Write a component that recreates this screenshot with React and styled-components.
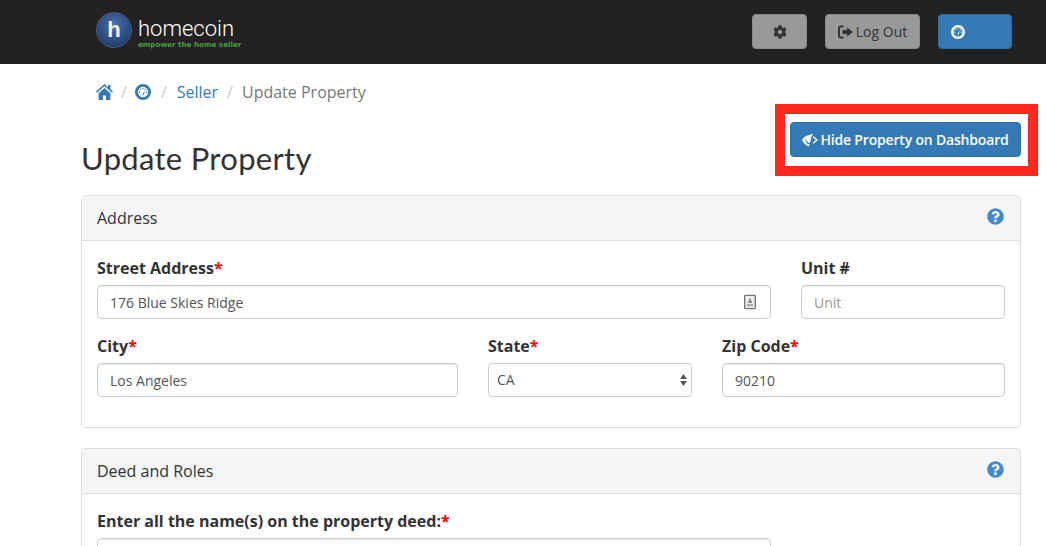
import React from "react";
import styled, { createGlobalStyle } from "styled-components";
import { FaCog, FaQuestionCircle } from "react-icons/fa";

const Global = createGlobalStyle`
  html, body { margin: 0; padding: 0; background: #fff; overflow: hidden; }
  body { font-family: "Open Sans", sans-serif; font-size: 14px; color: #333; }
  * { box-sizing: border-box; }
`;

const Page = styled.div`
  width: 1046px;
  height: 546px;
  overflow: hidden;
`;

const Navbar = styled.header`
  height: 64px;
  background: #222;
  display: flex;
  align-items: flex-start;
  justify-content: space-between;
  padding: 12px 34px 0 96px;
`;

const Logo = styled.div`
  display: flex;
  align-items: flex-start;
  gap: 6px;
`;

const LogoBadge = styled.div`
  width: 36px;
  height: 36px;
  border-radius: 50%;
  background: radial-gradient(circle at 50% 35%, #4a6fa5 0%, #2c4d80 55%, #18305a 100%);
  border: 1px solid #46597a;
  display: flex;
  align-items: center;
  justify-content: center;
  color: #f4f4f4;
  font: 700 22px "Liberation Sans", sans-serif;
`;

const LogoText = styled.div`
  display: flex;
  flex-direction: column;
  margin-top: 6px;
`;

const LogoName = styled.div`
  font: 300 22px/22px Roboto, sans-serif;
  color: #fff;
`;

const LogoTag = styled.div`
  font: 700 7.2px/9px "DejaVu Sans", sans-serif;
  color: #4c9a43;
  white-space: nowrap;
`;

const NavActions = styled.div`
  display: flex;
  align-items: center;
  margin-top: 2px;
`;

const NavButton = styled.div`
  height: 35px;
  width: ${(p) => p.$w}px;
  margin-left: ${(p) => p.$ml}px;
  border-radius: 4px;
  display: flex;
  align-items: center;
  justify-content: ${(p) => (p.$start ? "flex-start" : "center")};
  padding-left: ${(p) => (p.$start ? 12 : 0)}px;
  gap: 3px;
  font-size: 14px;
  background: ${(p) => (p.$primary ? "#337ab7" : "#999")};
  border: 1px solid ${(p) => (p.$primary ? "#2e6da4" : "#8a8a8a")};
  color: ${(p) => (p.$primary ? "#fff" : "#333")};
`;

const Crumbs = styled.nav`
  display: flex;
  align-items: center;
  height: 24px;
  margin: 16px 0 0 96px;
  font-size: 16px;
  color: #777;
`;

const CrumbSep = styled.span`
  color: #ccc;
  margin: 0 ${(p) => p.$m || 9}px;
`;

const CrumbLink = styled.span`
  color: #337ab7;
  display: inline-flex;
  align-items: center;
`;

const Content = styled.main`
  padding: 0 25px 0 81px;
`;

const TitleRow = styled.div`
  display: flex;
  justify-content: space-between;
  align-items: flex-start;
  height: 91px;
`;

const Title = styled.h1`
  margin: 36px 0 0;
  font: 400 31px/36px Lato, sans-serif;
  letter-spacing: 0.3px;
  color: #333;
`;

const HideWrap = styled.div`
  position: relative;
  margin-top: 18px;
`;

const HideButton = styled.div`
  width: 231px;
  height: 35px;
  border-radius: 4px;
  background: #337ab7;
  border: 1px solid #2e6da4;
  color: #fff;
  font-size: 14px;
  font-weight: 600;
  letter-spacing: -0.18px;
  display: flex;
  align-items: center;
  justify-content: center;
  gap: 2px;
  white-space: nowrap;
`;

const Callout = styled.div`
  position: absolute;
  left: -15px;
  top: -18px;
  width: 263px;
  height: 72px;
  border: 10px solid #ff2a1f;
  pointer-events: none;
`;

const Panel = styled.section`
  border: 1px solid #ddd;
  border-radius: 4px;
  margin-bottom: 20px;
  height: ${(p) => p.$h}px;
`;

const PanelHead = styled.div`
  height: 45px;
  background: #f5f5f5;
  border-bottom: 1px solid #ddd;
  border-radius: 3px 3px 0 0;
  padding: 0 16px 0 15px;
  display: flex;
  align-items: center;
  justify-content: space-between;
  font-size: 16px;
  color: #333;
`;

const HelpIcon = styled(FaQuestionCircle)`
  color: #428bca;
  width: 17px;
  height: 17px;
  margin-top: -4px;
`;

const PanelBody = styled.div`
  padding: 17px 15px 0;
  display: flex;
  flex-direction: column;
  gap: 17px;
`;

const Row = styled.div`
  display: grid;
  grid-template-columns: ${(p) => p.$cols};
  column-gap: 30px;
`;

const Field = styled.div`
  display: flex;
  flex-direction: column;
`;

const Label = styled.label`
  font-size: 16px;
  font-weight: 700;
  line-height: 20px;
  margin-bottom: 7px;
  color: #333;
`;

const Req = styled.span`
  color: #f00;
`;

const InputWrap = styled.div`
  position: relative;
`;

const Input = styled.input`
  width: 100%;
  height: 34px;
  border: 1px solid #ccc;
  border-radius: 4px;
  padding: 0 12px;
  font: 400 14px "Open Sans", sans-serif;
  color: #555;
  background: #fff;
  outline: none;
  box-shadow: inset 0 1px 1px rgba(0, 0, 0, 0.075);
  &::placeholder { color: #999; opacity: 1; }
`;

const Select = styled.select`
  width: 100%;
  height: 34px;
  border: 1px solid #ccc;
  border-radius: 4px;
  padding: 0 12px 2px 8px;
  font: 400 14px "Open Sans", sans-serif;
  color: #555;
  background: #fff;
  appearance: none;
  outline: none;
`;

const Overlay = styled.svg`
  position: absolute;
  top: 50%;
  transform: translateY(-50%);
  right: ${(p) => p.$r}px;
  pointer-events: none;
`;

const Gauge = ({ size = 16, color = "#337ab7", hole = "#fff" }) => (
  <svg width={size} height={size} viewBox="0 0 16 16">
    <circle cx="8" cy="8" r="6.6" fill={hole} stroke={color} strokeWidth="2.8" />
    <g fill={color}>
      <circle cx="4.4" cy="8.2" r="0.7" />
      <circle cx="5.4" cy="5.4" r="0.7" />
      <circle cx="8" cy="4.4" r="0.7" />
      <circle cx="11.6" cy="8.2" r="0.7" />
      <circle cx="10.6" cy="5.4" r="0.7" />
    </g>
    <path d="M7.3 10.6 L10 6.6 L8.8 11 Z" fill={color} />
  </svg>
);

const SignOut = () => (
  <svg width="15" height="14" viewBox="0 0 15 14" fill="#333">
    <path d="M5.5 0.5H3A3 3 0 0 0 0 3.5v7a3 3 0 0 0 3 3h2.5v-2H3A1 1 0 0 1 2 10.5v-7a1 1 0 0 1 1-1h2.5z" />
    <path d="M9 2.2 15 7l-6 4.8V9H4.5V5H9z" />
  </svg>
);

const House = () => (
  <svg width="17" height="16" viewBox="0 0 17 16" fill="#337ab7">
    <path d="M8.5 0 0 7.6l1 1.1L8.5 2l7.5 6.7 1-1.1-2.6-2.3V1h-2.4v2.2z" />
    <path d="M2.6 9.2 8.5 4l5.9 5.2V16H10v-4.6H7V16H2.6z" />
  </svg>
);

const HideEye = () => (
  <svg width="16" height="14" viewBox="0 0 16 14" fill="#fff">
    <path d="M0 7C1.6 4.2 4.4 2.2 7.6 2.1L11 0.4 9.6 3.6 7 13.4C3.9 12.6 1.5 10.2 0 7z" />
    <path d="M4.6 6.4a3 3 0 0 0 3.6 3.5L7.6 11.6A4.6 4.6 0 0 1 3.6 6.2z" fill="#337ab7" />
    <path d="M11.6 3.2 16 7l-4.4 3.8-.9-1L13.9 7l-3.2-2.8z" />
  </svg>
);

const Req2 = () => <Req>*</Req>;

export default function App() {
  return (
    <Page>
      <Global />
      <Navbar>
        <Logo>
          <LogoBadge>h</LogoBadge>
          <LogoText>
            <LogoName>homecoin</LogoName>
            <LogoTag>empower the home seller</LogoTag>
          </LogoText>
        </Logo>
        <NavActions>
          <NavButton $w={55}>
            <FaCog size={14} color="#333" />
          </NavButton>
          <NavButton $w={95} $ml={18}>
            <SignOut />
            Log Out
          </NavButton>
          <NavButton $w={74} $ml={18} $primary $start>
            <Gauge size={14} color="#fff" hole="#337ab7" />
          </NavButton>
        </NavActions>
      </Navbar>
      <Crumbs>
        <CrumbLink>
          <House />
        </CrumbLink>
        <CrumbSep $m={8}>/</CrumbSep>
        <CrumbLink>
          <Gauge />
        </CrumbLink>
        <CrumbSep $m={10}>/</CrumbSep>
        <CrumbLink>Seller</CrumbLink>
        <CrumbSep>/</CrumbSep>
        <span>Update Property</span>
      </Crumbs>
      <Content>
        <TitleRow>
          <Title>Update Property</Title>
          <HideWrap>
            <HideButton>
              <HideEye />
              Hide Property on Dashboard
            </HideButton>
            <Callout />
          </HideWrap>
        </TitleRow>
        <Panel $h={233}>
          <PanelHead>
            Address
            <HelpIcon />
          </PanelHead>
          <PanelBody>
            <Row $cols="674px 204px">
              <Field>
                <Label>
                  Street Address
                  <Req2 />
                </Label>
                <InputWrap>
                  <Input defaultValue="176 Blue Skies Ridge" />
                  <Overlay $r={15} width="12" height="15" viewBox="0 0 12 15">
                    <rect x="0.7" y="0.7" width="10.6" height="13.6" rx="1" fill="#eee" stroke="#777" strokeWidth="1.4" />
                    <path d="M6 3 8.4 8.5H3.6z" fill="#888" />
                    <rect x="3" y="9.5" width="6" height="2.4" fill="#aaa" />
                  </Overlay>
                </InputWrap>
              </Field>
              <Field>
                <Label>Unit #</Label>
                <Input placeholder="Unit" />
              </Field>
            </Row>
            <Row $cols="361px 204px 283px">
              <Field>
                <Label>
                  City
                  <Req2 />
                </Label>
                <Input defaultValue="Los Angeles" />
              </Field>
              <Field>
                <Label>
                  State
                  <Req2 />
                </Label>
                <InputWrap>
                  <Select defaultValue="CA">
                    <option>CA</option>
                  </Select>
                  <Overlay $r={5} width="7" height="14" viewBox="0 0 7 14">
                    <path d="M3.5 1 7 6H0zM3.5 13 0 8h7z" fill="#555" />
                  </Overlay>
                </InputWrap>
              </Field>
              <Field>
                <Label>
                  Zip Code
                  <Req2 />
                </Label>
                <Input defaultValue="90210" />
              </Field>
            </Row>
          </PanelBody>
        </Panel>
        <Panel $h={200}>
          <PanelHead>
            Deed and Roles
            <HelpIcon />
          </PanelHead>
          <PanelBody>
            <Row $cols="674px 204px">
              <Field>
                <Label>
                  Enter all the name(s) on the property deed:
                  <Req2 />
                </Label>
                <Input />
              </Field>
            </Row>
          </PanelBody>
        </Panel>
      </Content>
    </Page>
  );
}
